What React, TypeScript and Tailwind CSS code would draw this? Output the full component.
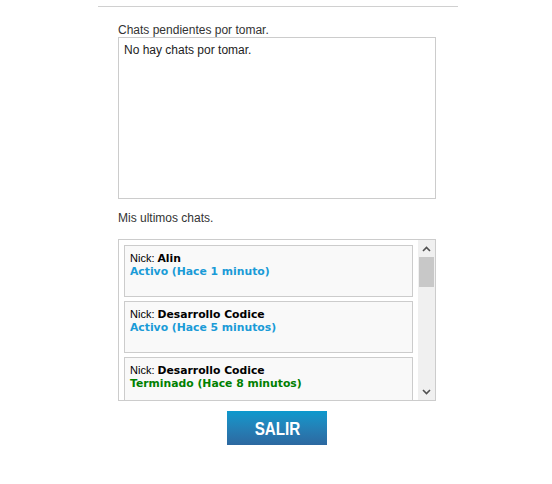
import React from "react";

type Chat = {
    nick: string;
    status: string;
    done: boolean;
};

const chats: Chat[] = [
    {nick: "Alin", status: "Activo (Hace 1 minuto)", done: false},
    {nick: "Desarrollo Codice", status: "Activo (Hace 5 minutos)", done: false},
    {nick: "Desarrollo Codice", status: "Terminado (Hace 8 minutos)", done: true},
];

function ChatItem({chat}: { chat: Chat }) {
    return (
        <div className="h-[52px] shrink-0 border border-[#cccccc] bg-[#f9f9f9] px-[5px] pt-[6px] text-[11px] leading-[13px]">
            <div className="text-black">
                Nick: <b className="font-['DejaVu_Sans',sans-serif] text-[10.8px]">{chat.nick}</b>
            </div>
            <div className={`font-['DejaVu_Sans',sans-serif] text-[10.8px] font-bold ${chat.done ? "text-[#008000]" : "text-[#1a9bd7]"}`}>
                {chat.status}
            </div>
        </div>
    );
}

function FakeScrollbar() {
    return (
        <div className="flex w-[17px] shrink-0 flex-col bg-[#f0f0f0]">
            <div className="flex h-[17px] items-center justify-center">
                <svg width="9" height="6" viewBox="0 0 9 6">
                    <path d="M1 5 L4.5 1.5 L8 5" fill="none" stroke="#505050" strokeWidth="1.6" />
                </svg>
            </div>
            <div className="mx-[1px] h-[30px] bg-[#c8c8c8]" />
            <div className="flex-1" />
            <div className="flex h-[17px] items-center justify-center">
                <svg width="9" height="6" viewBox="0 0 9 6">
                    <path d="M1 1 L4.5 4.5 L8 1" fill="none" stroke="#505050" strokeWidth="1.6" />
                </svg>
            </div>
        </div>
    );
}

export default function App() {
    return (
        <div className="min-h-[484px] bg-white font-['Liberation_Sans',Arial,sans-serif]">
            <div className="ml-[98px] mt-[6px] w-[360px] border-t border-[#d0d0d0] pl-[20px] pr-[22px]">
                <p className="mt-[16px] text-[12px] leading-[14px] text-[#333333]">Chats pendientes por tomar.</p>
                <div className="h-[162px] border border-[#cccccc] px-[5px] pt-[5px] text-[12px] leading-[14px] text-[#222222]">
                    No hay chats por tomar.
                </div>

                <p className="mt-[12px] text-[12px] leading-[14px] text-[#333333]">Mis ultimos chats.</p>
                <div className="mt-[14px] flex h-[162px] border border-[#cccccc]">
                    <div className="flex flex-1 flex-col gap-[4px] overflow-hidden pl-[5px] pr-[5px] pt-[5px]">
                        {chats.map((chat, i) => (
                            <ChatItem key={i} chat={chat} />
                        ))}
                    </div>
                    <FakeScrollbar />
                </div>

                <div className="mt-[10px] flex justify-center">
                    <button className="flex h-[34px] w-[100px] items-center justify-center bg-gradient-to-b from-[#0a99cd] to-[#2c68a0] text-white">
                        <span className="scale-x-80 text-[19px] font-bold leading-none">SALIR</span>
                    </button>
                </div>
            </div>
        </div>
    );
}
